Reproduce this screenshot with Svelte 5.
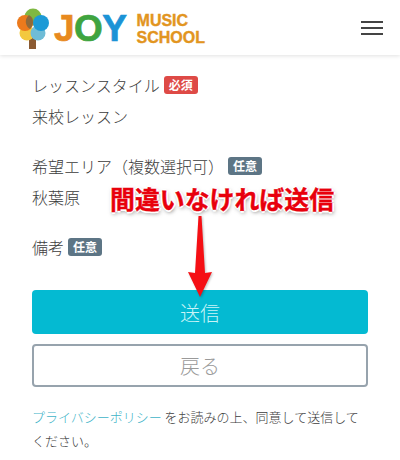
<script>
	let fields = [
		{ label: "レッスンスタイル", badge: "必須", required: true, value: "来校レッスン" },
		{ label: "希望エリア（複数選択可）", badge: "任意", required: false, value: "秋葉原" },
		{ label: "備考", badge: "任意", required: false, value: "" }
	];
</script>

<div class="page">
	<header>
		<div class="logo">
			<svg class="tree" width="32" height="41" viewBox="0 0 32 41">
				<rect x="12" y="28" width="7" height="13" fill="#8a5a32" />
				<circle cx="10" cy="25" r="7.5" fill="#f3c93f" />
				<circle cx="21" cy="25" r="7.5" fill="#6fbcd6" />
				<circle cx="16" cy="9" r="8.5" fill="#7fb842" />
				<circle cx="8" cy="15" r="8" fill="#ec7a1c" />
				<circle cx="24" cy="15" r="8" fill="#1d9ad6" />
				<path d="M12 7 a8 8 0 0 1 4 8 a8 8 0 0 1-3 6 a8.5 8.5 0 0 1-1-14z" fill="#8f6a3a" />
			</svg>
			<span class="joy"><span class="j">J</span><span class="o">O</span><span class="y">Y</span></span>
			<span class="school">MUSIC<br />SCHOOL</span>
		</div>
		<button class="burger" type="button" aria-label="menu">
			<span></span><span></span><span></span>
		</button>
	</header>

	<main>
		{#each fields as f}
			<div class="field">
				<div class="label">
					{f.label}<span class="badge" class:required={f.required}>{f.badge}</span>
				</div>
				{#if f.value}
					<div class="value">{f.value}</div>
				{/if}
			</div>
		{/each}

		<button class="send" type="button">送信</button>
		<button class="back" type="button">戻る</button>

		<p class="note"><span class="link">プライバシーポリシー</span> をお読みの上、同意して送信してください。</p>

		<div class="callout">間違いなければ送信</div>
		<svg class="arrow" width="26" height="82" viewBox="0 0 26 82">
			<path d="M11.5 0 L14.5 0 L18 57 L25 56 L13 81 L1 56 L8 57 Z" fill="#f50f14" />
		</svg>
	</main>
</div>

<style>
	:global(body) {
		background: #fff;
	}
	.page {
		width: 400px;
		height: 460px;
		overflow: hidden;
		font-family: "Noto Sans CJK JP", "Open Sans", sans-serif;
		font-weight: 300;
		color: #3c3c3c;
	}
	header {
		height: 55px;
		display: flex;
		align-items: center;
		justify-content: space-between;
		padding: 0 17px;
		background: #fff;
		box-shadow: 0 1px 4px rgba(0, 0, 0, 0.12);
	}
	.logo {
		display: flex;
		align-items: center;
	}
	.tree {
		margin-top: 1px;
	}
	.joy {
		font-family: "Liberation Sans", sans-serif;
		font-weight: 700;
		font-size: 37px;
		letter-spacing: -0.5px;
		line-height: 1;
		margin-left: 5px;
		margin-top: 1px;
		-webkit-text-stroke: 0.7px currentColor;
	}
	.j {
		color: #e88a1e;
	}
	.o {
		color: #3fa43f;
	}
	.y {
		color: #1b93d6;
	}
	.school {
		font-family: "Liberation Sans", sans-serif;
		font-weight: 700;
		font-size: 16px;
		line-height: 17px;
		color: #e2951f;
		margin-left: 10px;
		margin-top: 2px;
		-webkit-text-stroke: 0.4px currentColor;
	}
	.burger {
		width: 22px;
		display: flex;
		flex-direction: column;
		gap: 4px;
		padding: 0;
		border: none;
		background: none;
		margin-right: 0;
	}
	.burger span {
		display: block;
		height: 2px;
		background: #444;
	}
	main {
		position: relative;
		padding: 19px 32px 0;
	}
	.field {
		margin-bottom: 28px;
	}
	.label {
		font-size: 16px;
		line-height: 22px;
		display: flex;
		align-items: center;
	}
	.value {
		font-size: 16px;
		line-height: 22px;
		margin-top: 9px;
	}
	.badge {
		font-size: 12px;
		font-weight: 700;
		line-height: 18px;
		padding: 0 5px;
		margin-left: 4px;
		border-radius: 3px;
		background: #5d7585;
		color: #fff;
	}
	.badge.required {
		background: #de4a46;
	}
	.send,
	.back {
		display: block;
		width: 336px;
		border-radius: 4px;
		font-family: inherit;
		font-weight: 300;
		font-size: 20px;
		padding: 0;
	}
	.send {
		height: 44px;
		margin-top: 32px;
		border: none;
		background: #04bad2;
		color: #c9f4f7;
	}
	.back {
		height: 43px;
		margin-top: 10px;
		border: 2px solid #97a3ad;
		background: #fff;
		color: #9a9a9a;
	}
	.note {
		margin: 18px 0 0;
		font-size: 13px;
		line-height: 24px;
	}
	.link {
		color: #3fb4c8;
	}
	.callout {
		position: absolute;
		left: 110px;
		top: 126px;
		font-size: 24.9px;
		font-weight: 700;
		line-height: 34px;
		white-space: nowrap;
		color: #e8000c;
		-webkit-text-stroke: 0.4px #e8000c;
		text-shadow:
			2px 0 0 #fff,
			-2px 0 0 #fff,
			0 2px 0 #fff,
			0 -2px 0 #fff,
			1px 2px 4px rgba(0, 0, 0, 0.55);
	}
	.arrow {
		position: absolute;
		left: 187px;
		top: 161px;
		filter: drop-shadow(1px 1px 1px rgba(0, 0, 0, 0.25));
	}
</style>
